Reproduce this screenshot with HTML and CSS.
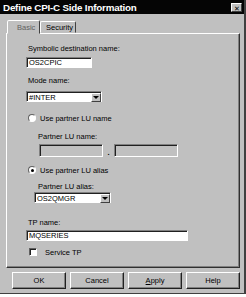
FILE: index.html
```html
<!DOCTYPE html>
<html>
<head>
<meta charset="utf-8">
<link rel="stylesheet" href="styles.css">
</head>
<body>
<div class="window">
  <div class="titlebar">
    <span class="title">Define CPI-C Side Information</span>
    <span class="close">✕</span>
  </div>
  <div class="tabs">
    <div class="tab active">Basic</div>
    <div class="tab">Security</div>
  </div>
  <div class="panel">
    <div class="label l1">Symbolic destination name:</div>
    <div class="input w-sym">OS2CPIC</div>

    <div class="label l2">Mode name:</div>
    <div class="combo w-mode"><span class="ctext">#INTER</span><span class="drop"><span class="arrow"></span></span></div>

    <div class="option o1"><span class="radio"></span><span>Use partner LU name</span></div>
    <div class="label indent l3">Partner LU name:</div>
    <div class="lu-row">
      <div class="input disabled w-net"></div>
      <span class="dot">.</span>
      <div class="input disabled w-lu"></div>
    </div>

    <div class="option o2"><span class="radio on"></span><span>Use partner LU alias</span></div>
    <div class="label indent l4">Partner LU alias:</div>
    <div class="combo w-alias indent-box"><span class="ctext">OS2QMGR</span><span class="drop"><span class="arrow"></span></span></div>

    <div class="label l5">TP name:</div>
    <div class="input w-tp">MQSERIES</div>

    <div class="option o3"><span class="check"></span><span class="ctext2">Service TP</span></div>
  </div>
  <div class="buttons">
    <div class="btn">OK</div>
    <div class="btn">Cancel</div>
    <div class="btn"><u>A</u>pply</div>
    <div class="btn">Help</div>
  </div>
</div>
</body>
</html>
```
FILE: styles.css
```css
* { box-sizing: border-box; }
html, body { margin: 0; padding: 0; background: #ffffff; }
body {
  font-family: "Liberation Sans", Arial, sans-serif;
  font-size: 7.5px;
  color: #000;
}
.window {
  width: 246px;
  height: 294px;
  background: #c0c0c0;
  border-right: 2px solid #404040;
  border-bottom: 1px solid #404040;
}
.titlebar {
  height: 14px;
  background: #050505;
  color: #fff;
  display: flex;
  align-items: center;
  justify-content: space-between;
  padding: 0 2px 0 3px;
}
.title {
  font-weight: bold;
  font-size: 9.8px;
  letter-spacing: -0.2px;
}
.close {
  width: 11px;
  height: 9px;
  background: #c0c0c0;
  color: #000;
  font-size: 7px;
  line-height: 9px;
  text-align: center;
  border: 1px solid;
  border-color: #fff #404040 #404040 #fff;
  margin-top: 1px;
}
.tabs {
  display: flex;
  align-items: flex-end;
  height: 19px;
  padding-left: 7px;
}
.tab {
  height: 12px;
  padding: 0 6px 0 8px;
  line-height: 11px;
  border: 1px solid;
  border-color: #fff #404040 transparent #fff;
  border-radius: 2px 2px 0 0;
  color: #000;
}
.tab.active {
  height: 14px;
  width: 33px;
  padding-left: 9px;
  line-height: 13px;
  color: #606060;
  position: relative;
  z-index: 1;
  margin-bottom: -1px;
  background: #c0c0c0;
}
.tab:not(.active) {
  padding: 0 5px 0 5px;
  width: 36px;
}
.panel {
  margin-left: 6px;
  width: 234px;
  height: 235px;
  border: 1px solid;
  border-color: #fff #303030 #303030 #fff;
  box-shadow: inset -1px -1px 0 #808080;
  padding-left: 19px;
  display: flex;
  flex-direction: column;
  align-items: flex-start;
}
.label {
  height: 10px;
  line-height: 10px;
  white-space: nowrap;
}
.indent { margin-left: 12px; }
.indent-box { margin-left: 8px; }
.l1 { margin-top: 10px; padding-left: 2px; }
.l2 { margin-top: 8px; padding-left: 2px; }
.l3 { margin-top: 9px; }
.l4 { margin-top: 7px; }
.l5 { margin-top: 15px; padding-left: 2px; }

.input {
  height: 11px;
  background: #fff;
  border: 1px solid;
  border-color: #808080 #fff #fff #808080;
  box-shadow: inset 1px 1px 0 #202020;
  line-height: 9px;
  padding-left: 2px;
  white-space: nowrap;
  margin-top: 3px;
}
.w-sym { width: 66px; }
.w-tp { width: 162px; margin-top: 2px; }
.input.disabled {
  background: #c0c0c0;
  height: 13px;
  margin-top: 0;
}
.lu-row {
  display: flex;
  align-items: flex-end;
  margin-left: 13px;
  margin-top: 2px;
}
.w-net { width: 64px; }
.w-lu { width: 64px; }
.dot {
  width: 11px;
  text-align: center;
  line-height: 8px;
  font-weight: bold;
}

.combo {
  display: flex;
  height: 11px;
  background: #fff;
  border: 1px solid;
  border-color: #808080 #fff #fff #808080;
  box-shadow: inset 1px 1px 0 #202020;
  margin-top: 5px;
}
.w-mode { width: 76px; margin-top: 5px; }
.w-alias { width: 77px; margin-top: 0; }
.ctext {
  flex: 1;
  line-height: 9px;
  padding-left: 2px;
  padding-top: 1px;
}
.drop {
  width: 10px;
  height: 9px;
  margin-top: 1px;
  background: #c0c0c0;
  border: 1px solid;
  border-color: #fff #404040 #404040 #fff;
  display: flex;
  align-items: center;
  justify-content: center;
}
.arrow {
  width: 0; height: 0;
  border-left: 3px solid transparent;
  border-right: 3px solid transparent;
  border-top: 3px solid #000;
}

.option {
  display: flex;
  align-items: center;
  height: 10px;
  gap: 4px;
  padding-left: 2px;
  white-space: nowrap;
}
.o1 { margin-top: 11px; }
.o2 { margin-top: 8px; }
.o3 { margin-top: 6px; padding-left: 3px; gap: 8px; }
.radio {
  width: 8px;
  height: 8px;
  border-radius: 50%;
  background: #fff;
  border: 1px solid;
  border-color: #606060 #fff #fff #606060;
  display: flex;
  align-items: center;
  justify-content: center;
}
.radio.on::after {
  content: "";
  width: 3px;
  height: 3px;
  border-radius: 50%;
  background: #000;
}
.check {
  width: 8px;
  height: 8px;
  background: #fff;
  border: 1px solid;
  border-color: #606060 #fff #fff #606060;
  box-shadow: inset 1px 1px 0 #202020;
}

.buttons {
  display: flex;
  gap: 4px;
  padding-left: 12px;
  margin-top: 4px;
}
.btn {
  width: 54px;
  height: 17px;
  line-height: 15px;
  text-align: center;
  border: 1px solid;
  border-color: #fff #202020 #202020 #fff;
  box-shadow: inset -1px -1px 0 #808080;
}
.btn u { text-decoration: underline; }
```
